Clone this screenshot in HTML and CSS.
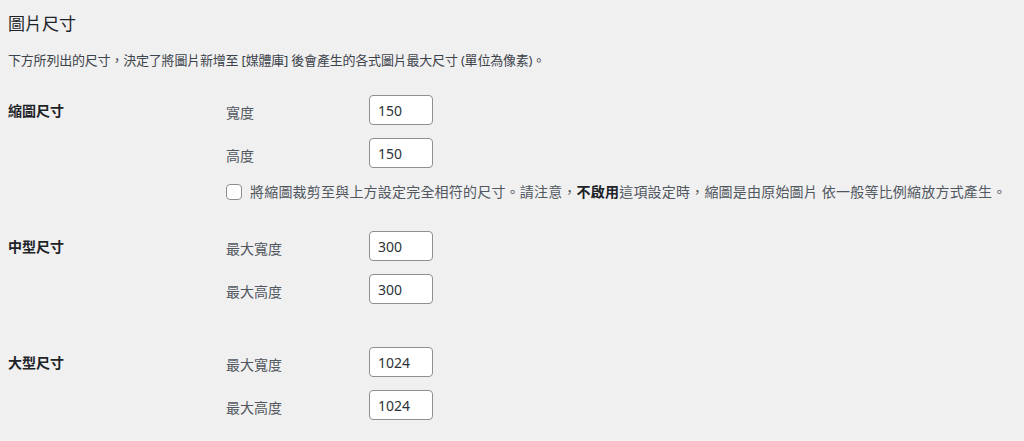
FILE: index.html
```html
<!DOCTYPE html>
<html lang="zh-Hant">
<head>
    <meta charset="UTF-8">
    <meta name="viewport" content="width=device-width, initial-scale=1.0">
    <title>媒體設定</title>
    <link rel="stylesheet" href="styles.css">
</head>
<body>
<div class="wrap">
    <h2 class="title">圖片尺寸</h2>
    <p class="desc">下方所列出的尺寸，決定了將圖片新增至 [媒體庫] 後會產生的各式圖片最大尺寸 (單位為像素)。</p>

    <div class="size-row">
        <div class="size-label">縮圖尺寸</div>
        <div class="size-fields">
            <div class="field">
                <label for="thumbnail_size_w">寬度</label>
                <input type="number" id="thumbnail_size_w" class="small-text" value="150">
            </div>
            <div class="field">
                <label for="thumbnail_size_h">高度</label>
                <input type="number" id="thumbnail_size_h" class="small-text" value="150">
            </div>
            <div class="crop">
                <input type="checkbox" id="thumbnail_crop">
                <label for="thumbnail_crop">將縮圖裁剪至與上方設定完全相符的尺寸。請注意，<strong>不啟用</strong>這項設定時，縮圖是由原始圖片 依一般等比例縮放方式產生。</label>
            </div>
        </div>
    </div>

    <div class="size-row">
        <div class="size-label">中型尺寸</div>
        <div class="size-fields">
            <div class="field">
                <label for="medium_size_w">最大寬度</label>
                <input type="number" id="medium_size_w" class="small-text" value="300">
            </div>
            <div class="field">
                <label for="medium_size_h">最大高度</label>
                <input type="number" id="medium_size_h" class="small-text" value="300">
            </div>
        </div>
    </div>

    <div class="size-row">
        <div class="size-label">大型尺寸</div>
        <div class="size-fields">
            <div class="field">
                <label for="large_size_w">最大寬度</label>
                <input type="number" id="large_size_w" class="small-text" value="1024">
            </div>
            <div class="field">
                <label for="large_size_h">最大高度</label>
                <input type="number" id="large_size_h" class="small-text" value="1024">
            </div>
        </div>
    </div>
</div>
</body>
</html>
```

FILE: styles.css
```css
body { margin: 0; background-color: #f0f0f1; color: #3c434a; font-family: "Noto Sans", "Noto Sans CJK TC", sans-serif; font-size: 13px; }
.wrap { padding: 12px 8px 0; }
.title { margin: 0; font-size: 17px; line-height: 24px; font-weight: 400; color: #1d2327; }
.desc { margin: 14px 0 11px; font-size: 13px; line-height: 20px; color: #3c434a; letter-spacing: -0.2px; }

/* one block per image size: label column + fields column */
.size-row { display: grid; grid-template-columns: 218px auto; padding: 14px 0; }
.size-label { font-size: 14px; font-weight: 600; color: #1d2327; line-height: 30px; padding-top: 1px; }

.field { display: flex; align-items: center; height: 30px; margin-bottom: 13px; font-size: 14px; }
.field:last-child { margin-bottom: 15px; }
.field label { width: 143px; color: #50575e; padding-top: 3px; }

.small-text {
    width: 64px; height: 30px; box-sizing: border-box; padding: 0 8px; margin: 0;
    border: 1px solid #8c8f94; border-radius: 4px; background: #fff;
    font-family: "Noto Sans", sans-serif; font-size: 14px; color: #2c3338;
    -moz-appearance: textfield;
}
.small-text::-webkit-inner-spin-button, .small-text::-webkit-outer-spin-button { -webkit-appearance: none; margin: 0; }

.crop { display: flex; align-items: center; gap: 8px; line-height: 22px; font-size: 14px; color: #50575e; letter-spacing: 0.2px; }
.crop input {
    -webkit-appearance: none; appearance: none; width: 16px; height: 16px; margin: 0;
    border: 1px solid #8c8f94; border-radius: 4px; background: #fff; flex: none;
}
.crop strong { color: #1d2327; }
```
